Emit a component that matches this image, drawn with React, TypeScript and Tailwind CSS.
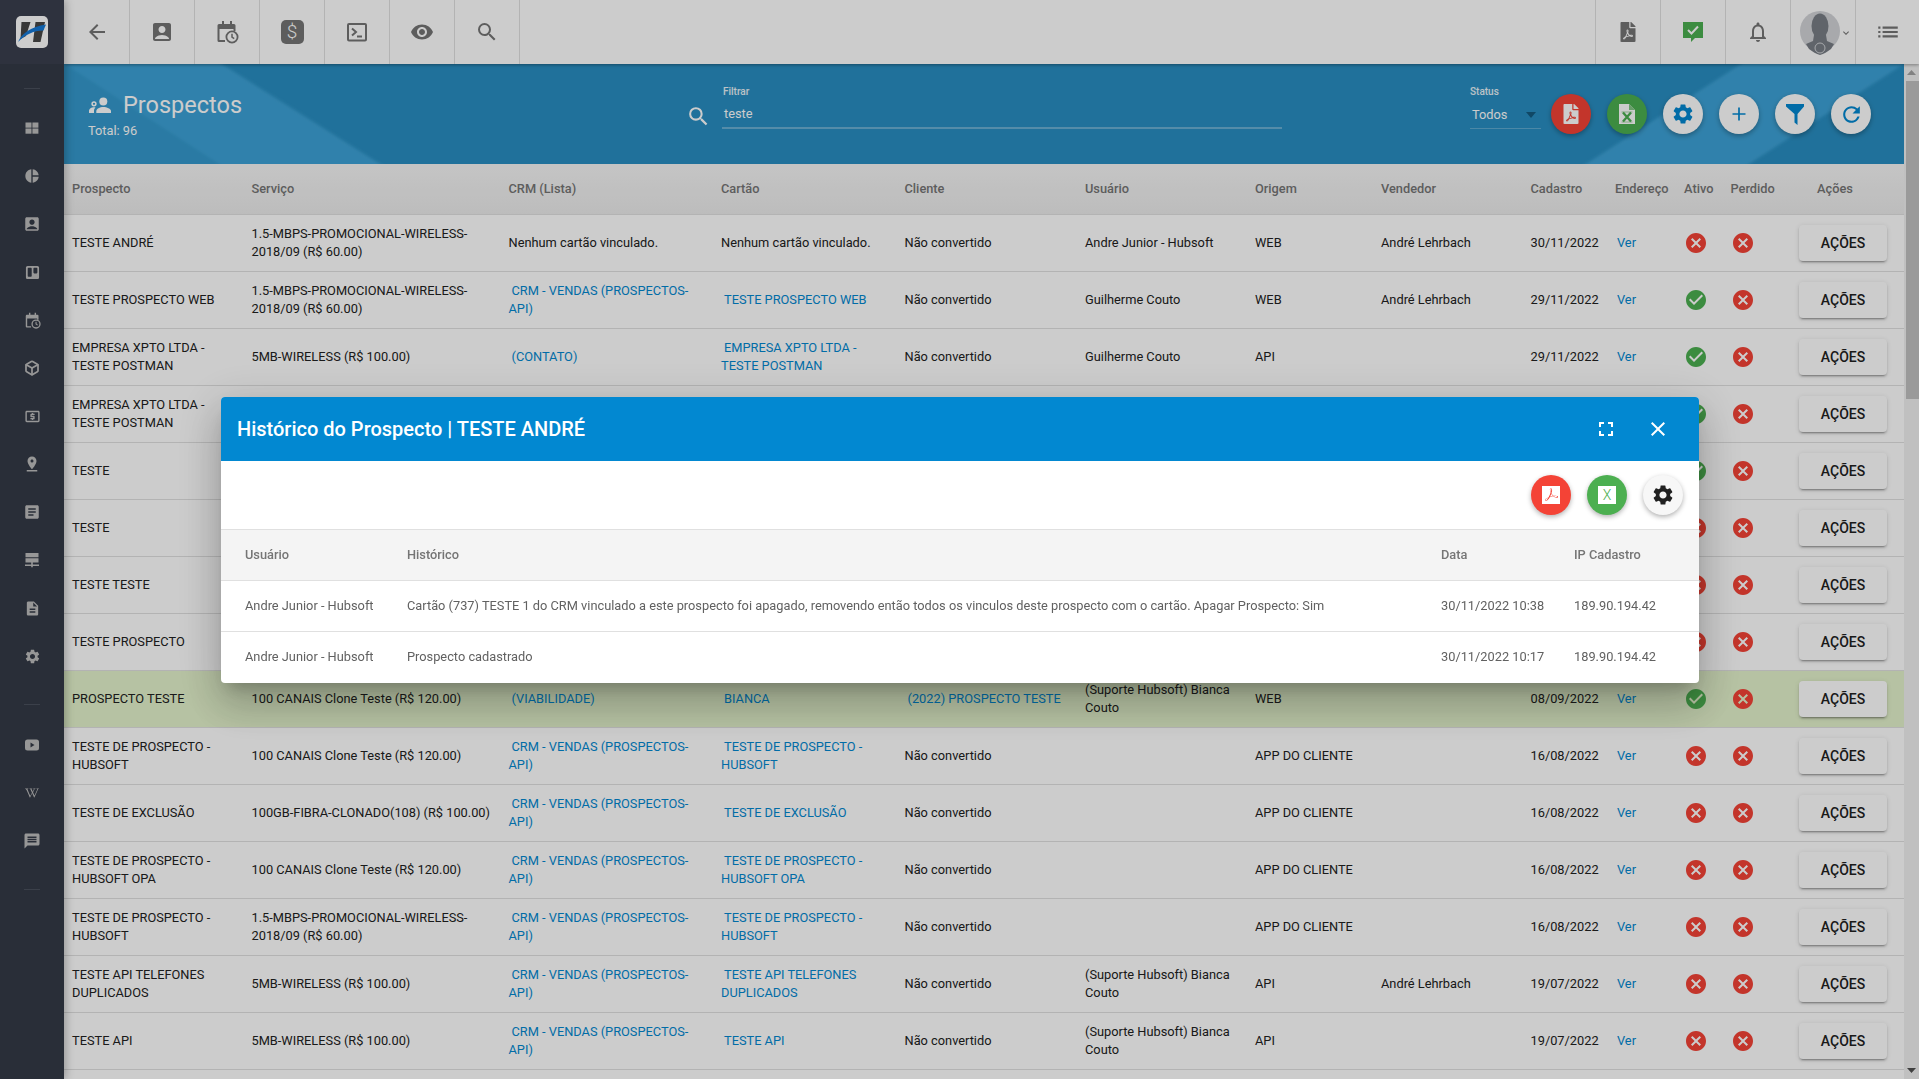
import React from "react";
import {
  MdArrowBack, MdAccountBox, MdVisibility, MdSearch, MdNotificationsNone, MdList, MdExpandMore,
  MdPieChart, MdLocalAtm, MdPinDrop, MdArticle, MdDescription, MdSettings, MdMessage,
  MdFullscreen, MdClose, MdRefresh, MdCancel, MdCheckCircle,
} from "react-icons/md";
import { FaFilePdf, FaTrello, FaWikipediaW } from "react-icons/fa";
import { SiAdobeacrobatreader } from "react-icons/si";
import { Box } from "lucide-react";

function CalendarClock({ size, bg, color }: { size: number; bg: string; color: string }) {
  return (
    <svg width={size} height={size} viewBox="0 0 24 24" fill="none">
      <path d="M7 1h2v3h6V1h2v3h2a1.5 1.5 0 0 1 1.5 1.5V11h-2V9H4.500v11H10v2H4a1.5 1.5 0 0 1-1.5-1.5v-15A1.5 1.5 0 0 1 4 4h3z" fill={color} />
      <circle cx="17" cy="17" r="5.6" fill={bg} stroke={color} strokeWidth="1.8" />
      <path d="M17 13.8V17l2.2 1.6" stroke={color} strokeWidth="1.5" />
    </svg>
  );
}

function Terminal() {
  return (
    <svg width="24" height="24" viewBox="0 0 24 24" fill="none" stroke="#757575" strokeWidth="2">
      <rect x="3" y="4" width="18" height="16.5" rx="1" />
      <path d="M7 8.5l4 3.5-4 3.5M12 16.5h5" />
    </svg>
  );
}

function GreenComment() {
  return (
    <svg width="24" height="24" viewBox="0 0 24 24">
      <path d="M2 2h20v16h-8l-4 4v-4H2z" fill="#4caf50" />
      <path d="M7 10l3.5 3.5L17 6.5" fill="none" stroke="#fff" strokeWidth="2" />
    </svg>
  );
}

function Avatar() {
  return (
    <svg width="40" height="44" viewBox="0 0 40 44">
      <circle cx="20" cy="20" r="20" fill="#d2d4d8" />
      <ellipse cx="20" cy="15" rx="8.500" ry="12.500" fill="#797e85" />
      <path d="M14 24h12l1 6 7 3-3 5c-4 3-7 5-11 6-4-1-7-3-11-6l-3-5 7-3z" fill="#797e85" />
      <circle cx="20" cy="37" r="5" fill="none" stroke="#d2d4d8" strokeWidth="1" />
    </svg>
  );
}

function Logo() {
  return (
    <svg width="32" height="32" viewBox="0 0 32 32" className="rounded-[5px]">
      <rect width="32" height="32" fill="#fff" />
      <path d="M5.500 6H14.500L10 20 4.500 23z" fill="#474747" />
      <path d="M19.500 6H29L24.500 26H17z" fill="#474747" />
      <path d="M2 26C6 17 15 11 30 8.500c-.8 2-1.500 3.500-2.500 6C17 14.500 9 19 2 26z" fill="#1479d6" />
    </svg>
  );
}

function Grid4() {
  return (
    <svg width="16" height="16" viewBox="0 0 16 16" fill="currentColor">
      <rect x="1.500" y="2.500" width="6" height="5.200" />
      <rect x="8.400" y="2.500" width="6" height="5.200" />
      <rect x="1.500" y="8.500" width="6" height="5.200" />
      <rect x="8.400" y="8.500" width="6" height="5.200" />
    </svg>
  );
}

function ServerNet() {
  return (
    <svg width="16" height="16" viewBox="0 0 16 16" fill="currentColor">
      <path d="M1.500 1h13v4.200h-13zM1.500 6.200h13v4.200h-13zM7.200 10.400h1.600v2h6.200v1.500H8.800v1.400H7.200v-1.400H1v-1.500h6.200z" />
    </svg>
  );
}

function PlayBox() {
  return (
    <svg width="16" height="16" viewBox="0 0 16 16">
      <rect x="1" y="2.500" width="14" height="11" rx="2.500" fill="currentColor" />
      <path d="M6.500 5.500l4 2.500-4 2.500z" fill="#343a46" />
    </svg>
  );
}

function Funnel() {
  return (
    <svg width="24" height="24" viewBox="0 0 24 24" fill="#0288d1">
      <path d="M3 2h18v2.500l-6.500 7.500v11l-3-2.500V12L3 4.500z" />
    </svg>
  );
}

function People() {
  return (
    <svg width="24" height="24" viewBox="0 0 24 24" fill="currentColor">
      <circle cx="15.300" cy="8.500" r="4" />
      <path d="M15.300 14c-3.500 0-7 1.700-7 4v2H23v-2c0-2.300-4.200-4-7.700-4z" />
      <circle cx="6" cy="10.800" r="1.900" fill="none" stroke="currentColor" strokeWidth="1.500" />
      <path d="M1 18c0-2.300 2.500-3.700 5-3.700.5 0 1 0 1.500.2-1 .9-1.500 2-1.500 3.300V20H1z" />
    </svg>
  );
}

function ExcelPaper() {
  return (
    <svg width="16" height="20" viewBox="0 0 16 20">
      <path d="M0 0h10l6 6v14H0z" fill="#fff" />
      <path d="M10 0l6 6h-6z" fill="#81c784" />
      <path d="M2.500 8h11M2.500 18h11" stroke="#a5d6a7" strokeWidth="1" />
      <path d="M4 8.500l8 9M12 8.500l-8 9" stroke="#4caf50" strokeWidth="2.300" />
    </svg>
  );
}

function ThinPlus() {
  return (
    <svg width="24" height="24" viewBox="0 0 24 24" fill="none" stroke="#0288d1" strokeWidth="1.700">
      <path d="M12 5.500v13M5.500 12h13" />
    </svg>
  );
}

const sideA = [
  <Grid4 />,
  <MdPieChart size={16} />,
  <MdAccountBox size={18} />,
  <FaTrello size={15} />,
  <CalendarClock size={17} bg="#343a46" color="currentColor" />,
  <Box size={16} strokeWidth={2.6} />,
  <MdLocalAtm size={17} />,
  <MdPinDrop size={18} />,
  <MdArticle size={18} />,
  <ServerNet />,
  <MdDescription size={17} />,
  <MdSettings size={17} />,
];
const sideB = [<PlayBox />, <FaWikipediaW size={14} />, <MdMessage size={18} />];

function Sidebar() {
  return (
    <aside className="w-16 shrink-0 h-full flex flex-col bg-[#343a46] text-[#bdbdbd] z-20 shadow-[2px_0_8px_rgba(0,0,0,0.25)]">
      <div className="h-16 shrink-0 bg-[#3a3f4e] flex items-center justify-center"><Logo /></div>
      <div className="mx-auto mt-6 w-4 h-px bg-[#4a505d]" />
      <div className="mt-[15px] flex flex-col">
        {sideA.map((icon, i) => (
          <div key={i} className="h-12 flex items-center justify-center">{icon}</div>
        ))}
      </div>
      <div className="mx-auto mt-6 w-4 h-px bg-[#4a505d]" />
      <div className="mt-4 flex flex-col">
        {sideB.map((icon, i) => (
          <div key={i} className="h-12 flex items-center justify-center">{icon}</div>
        ))}
      </div>
      <div className="mx-auto mt-6 w-4 h-px bg-[#4a505d]" />
    </aside>
  );
}

const leftCells = [
  <MdArrowBack size={24} />,
  <MdAccountBox size={24} />,
  <CalendarClock size={24} bg="#fff" color="#757575" />,
  <div className="w-[23px] h-6 rounded-[5px] bg-[#757575] text-white text-[19px] font-light flex items-center justify-center">$</div>,
  <Terminal />,
  <MdVisibility size={24} />,
  <MdSearch size={24} />,
];

function Topbar() {
  return (
    <header className="h-16 shrink-0 bg-white flex justify-between text-[#757575] z-10 shadow-[0_1px_3px_rgba(0,0,0,0.35)]">
      <div className="flex">
        {leftCells.map((c, i) => (
          <div key={i} className={"h-16 border-r border-[#e0e0e0] flex items-center justify-center " + (i === 0 ? "w-[66px]" : "w-[65px]")}>{c}</div>
        ))}
      </div>
      <div className="flex">
        <div className="w-[65px] h-16 border-l border-[#e0e0e0] flex items-center justify-center"><FaFilePdf size={20} /></div>
        <div className="w-[65px] h-16 border-l border-[#e0e0e0] flex items-center justify-center"><GreenComment /></div>
        <div className="w-[65px] h-16 border-l border-[#e0e0e0] flex items-center justify-center"><MdNotificationsNone size={24} /></div>
        <div className="w-[65px] h-16 border-l border-[#e0e0e0] flex items-center pl-[9px] pt-[2px]"><Avatar /><MdExpandMore size={12} /></div>
        <div className="w-[64px] h-16 border-l border-[#e0e0e0] flex items-center justify-center"><MdList size={26} /></div>
      </div>
    </header>
  );
}

function Fab({ className, children }: { className: string; children: React.ReactNode }) {
  return (
    <div className={"w-10 h-10 rounded-full flex items-center justify-center shadow-[0_2px_5px_rgba(0,0,0,0.3)] " + className}>
      {children}
    </div>
  );
}

function Band() {
  return (
    <section className="relative h-[100px] shrink-0 bg-[#298ec2] flex items-start pl-6 text-white overflow-hidden">
      <svg className="absolute inset-0 w-full h-full" viewBox="0 0 1840 100" preserveAspectRatio="none">
        <defs>
          <filter id="soft"><feGaussianBlur stdDeviation="1.500" /></filter>
        </defs>
        <g filter="url(#soft)">
          <path d="M-15-10L170 110H-20z" fill="#3599cd" />
          <path d="M-15-10H142L332 110H170z" fill="#3da2d7" />
          <path d="M1692.500-10H1855.500L1669.500 110H1506.500z" fill="#3da2d7" />
        </g>
      </svg>
      <div className="relative w-[598px] shrink-0 pt-[27px]">
        <div className="flex items-center gap-[11px] h-7">
          <People />
          <span className="text-[23.5px] leading-7">Prospectos</span>
        </div>
        <div className="mt-1 text-[12.8px] leading-4">Total: 96</div>
      </div>
      <MdSearch size={25} className="relative mt-[40px] shrink-0" />
      <div className="relative ml-[11px] mt-[22px] w-[560px] shrink-0">
        <div className="text-[10px] leading-3 font-medium pl-px text-white/90">Filtrar</div>
        <div className="mt-[7px] h-[18px] text-[12.8px] leading-[18px] pl-[2px]">teste</div>
        <div className="mt-[4px] h-[2px] bg-white/30" />
      </div>
      <div className="relative ml-[188px] mt-[22px] w-[71px] shrink-0">
        <div className="text-[10px] leading-3 font-medium text-white/90">Status</div>
        <div className="mt-[8px] h-[18px] flex items-center justify-between text-[12.8px] leading-[18px] pl-[2px] pr-[5px]">
          Todos
          <svg width="10" height="6" viewBox="0 0 10 6"><path d="M0 0h10L5 6z" fill="#145a80" /></svg>
        </div>
        <div className="mt-[4px] h-px bg-white/25" />
      </div>
      <div className="relative ml-[10px] mt-[30px] flex gap-4">
        <Fab className="bg-[#f44336] text-white"><FaFilePdf size={20} /></Fab>
        <Fab className="bg-[#4caf50]"><ExcelPaper /></Fab>
        <Fab className="bg-white text-[#0288d1]"><MdSettings size={24} /></Fab>
        <Fab className="bg-white"><ThinPlus /></Fab>
        <Fab className="bg-white"><Funnel /></Fab>
        <Fab className="bg-white text-[#0288d1]"><MdRefresh size={25} /></Fab>
      </div>
    </section>
  );
}

type Cell = string | null;
type Row = {
  name: string; svc: string; crm: Cell; card: Cell; client: Cell; clientLink?: boolean; user: string;
  origin: string; seller: string; date: string; active: boolean; green?: boolean;
};
const S15 = "1.5-MBPS-PROMOCIONAL-WIRELESS-2018/09 (R$ 60.00)";
const S5 = "5MB-WIRELESS (R$ 100.00)";
const S100 = "100 CANAIS Clone Teste (R$ 120.00)";
const CRM = "CRM - VENDAS (PROSPECTOS-API)";
const NC = "Não convertido";
const AL = "André Lehrbach";
const EX = "EMPRESA XPTO LTDA - TESTE POSTMAN";
const BI = "(Suporte Hubsoft) Bianca Couto";
const rows: Row[] = [
  { name: "TESTE ANDRÉ", svc: S15, crm: null, card: null, client: NC, user: "Andre Junior - Hubsoft", origin: "WEB", seller: AL, date: "30/11/2022", active: false },
  { name: "TESTE PROSPECTO WEB", svc: S15, crm: CRM, card: "TESTE PROSPECTO WEB", client: NC, user: "Guilherme Couto", origin: "WEB", seller: AL, date: "29/11/2022", active: true },
  { name: EX, svc: S5, crm: "(CONTATO)", card: EX, client: NC, user: "Guilherme Couto", origin: "API", seller: "", date: "29/11/2022", active: true },
  { name: EX, svc: S5, crm: "(CONTATO)", card: EX, client: NC, user: "Guilherme Couto", origin: "API", seller: "", date: "29/11/2022", active: true },
  { name: "TESTE", svc: S5, crm: CRM, card: "TESTE", client: NC, user: "Guilherme Couto", origin: "WEB", seller: "", date: "28/11/2022", active: true },
  { name: "TESTE", svc: S5, crm: CRM, card: "TESTE", client: NC, user: "Guilherme Couto", origin: "WEB", seller: "", date: "28/11/2022", active: false },
  { name: "TESTE TESTE", svc: S5, crm: CRM, card: "TESTE TESTE", client: NC, user: "Guilherme Couto", origin: "WEB", seller: "", date: "28/11/2022", active: false },
  { name: "TESTE PROSPECTO", svc: S5, crm: CRM, card: "TESTE PROSPECTO", client: NC, user: "Guilherme Couto", origin: "WEB", seller: "", date: "28/11/2022", active: false },
  { name: "PROSPECTO TESTE", svc: S100, crm: "(VIABILIDADE)", card: "BIANCA", client: "(2022) PROSPECTO TESTE", clientLink: true, user: BI, origin: "WEB", seller: "", date: "08/09/2022", active: true, green: true },
  { name: "TESTE DE PROSPECTO - HUBSOFT", svc: S100, crm: CRM, card: "TESTE DE PROSPECTO - HUBSOFT", client: NC, user: "", origin: "APP DO CLIENTE", seller: "", date: "16/08/2022", active: false },
  { name: "TESTE DE EXCLUSÃO", svc: "100GB-FIBRA-CLONADO(108) (R$ 100.00)", crm: CRM, card: "TESTE DE EXCLUSÃO", client: NC, user: "", origin: "APP DO CLIENTE", seller: "", date: "16/08/2022", active: false },
  { name: "TESTE DE PROSPECTO - HUBSOFT OPA", svc: S100, crm: CRM, card: "TESTE DE PROSPECTO - HUBSOFT OPA", client: NC, user: "", origin: "APP DO CLIENTE", seller: "", date: "16/08/2022", active: false },
  { name: "TESTE DE PROSPECTO - HUBSOFT", svc: S15, crm: CRM, card: "TESTE DE PROSPECTO - HUBSOFT", client: NC, user: "", origin: "APP DO CLIENTE", seller: "", date: "16/08/2022", active: false },
  { name: "TESTE API TELEFONES DUPLICADOS", svc: S5, crm: CRM, card: "TESTE API TELEFONES DUPLICADOS", client: NC, user: BI, origin: "API", seller: AL, date: "19/07/2022", active: false },
  { name: "TESTE API", svc: S5, crm: CRM, card: "TESTE API", client: NC, user: BI, origin: "API", seller: "", date: "19/07/2022", active: false },
];

const widths = ["w-[179.5px]", "w-[257px]", "w-[212.5px]", "w-[183.5px]", "w-[180.5px]", "w-[170px]", "w-[126px]", "w-[149.5px]", "w-[84.5px]", "w-[69px]", "w-[46.5px]", "w-[68.5px]", "w-[113px]"];
const heads = ["Prospecto", "Serviço", "CRM (Lista)", "Cartão", "Cliente", "Usuário", "Origem", "Vendedor", "Cadastro", "Endereço", "Ativo", "Perdido"];

function Lnk({ children, tight }: { children: React.ReactNode; tight?: boolean }) {
  return <a className={(tight ? "ml-[2px]" : "ml-[3px]") + " text-[#0288d1]"}>{children}</a>;
}

function Td({ children, className = "" }: { children?: React.ReactNode; className?: string }) {
  return <td className={"pl-2 align-middle border-b border-[#e0e0e0] " + className}>{children}</td>;
}

function Status({ on }: { on: boolean }) {
  return on ? <MdCheckCircle size={24} className="text-[#4caf50]" /> : <MdCancel size={24} className="text-[#f44336]" />;
}

function MainTable() {
  return (
    <table className="w-[1840px] table-fixed border-separate border-spacing-0 text-[12.8px] leading-[18px] text-[#212121]">
      <colgroup>{widths.map((w) => <col key={w} className={w} />)}</colgroup>
      <thead>
        <tr className="h-[51px] bg-[linear-gradient(#f6f6f6,#ececec)]">
          {heads.map((h) => (
            <th key={h} className="pl-2 text-left font-medium text-[#757575] whitespace-nowrap border-b border-[#e0e0e0]">{h}</th>
          ))}
          <th className="pl-[26px] text-left font-medium text-[#757575] border-b border-[#e0e0e0]">Ações</th>
        </tr>
      </thead>
      <tbody>
        {rows.map((r, i) => (
          <tr key={i} className={"h-[57px] " + (r.green ? "bg-[#e4f3cc]" : "bg-white")}>
            <Td className="pr-2">{r.name}</Td>
            <Td>{r.svc}</Td>
            <Td className="pr-2">{r.crm ? <Lnk>{r.crm}</Lnk> : "Nenhum cartão vinculado."}</Td>
            <Td className="pr-2">{r.card ? <Lnk>{r.card}</Lnk> : "Nenhum cartão vinculado."}</Td>
            <Td className="pr-2">{r.clientLink ? <Lnk>{r.client}</Lnk> : r.client}</Td>
            <Td className="pr-2">{r.user}</Td>
            <Td className="pr-2">{r.origin}</Td>
            <Td className="pr-2">{r.seller}</Td>
            <Td className="whitespace-nowrap">{r.date}</Td>
            <Td><Lnk tight>Ver</Lnk></Td>
            <Td><Status on={r.active} /></Td>
            <Td><Status on={false} /></Td>
            <Td>
              <div className="w-[88px] h-9 rounded-[4px] bg-white flex items-center justify-center text-sm font-medium text-[#212121] shadow-[0_3px_1px_-2px_rgba(0,0,0,0.2),0_2px_2px_0_rgba(0,0,0,0.14),0_1px_5px_0_rgba(0,0,0,0.12)]">AÇÕES</div>
            </Td>
          </tr>
        ))}
        <tr className="h-[57px] bg-white"><td colSpan={13} /></tr>
      </tbody>
    </table>
  );
}

function Scrollbar() {
  return (
    <div className="w-[15px] shrink-0 h-full bg-[#f1f1f1] flex flex-col">
      <div className="h-[17px] flex items-center justify-center">
        <svg width="9" height="5" viewBox="0 0 9 5"><path d="M0 5h9L4.500 0z" fill="#a3a3a3" /></svg>
      </div>
      <div className="h-[318px] ml-[2px] bg-[#c1c1c1]" />
      <div className="flex-1" />
      <div className="h-[17px] flex items-center justify-center">
        <svg width="9" height="5" viewBox="0 0 9 5"><path d="M0 0h9L4.500 5z" fill="#505050" /></svg>
      </div>
    </div>
  );
}

function Modal() {
  const mCols = ["w-[186px]", "w-[1034px]", "w-[133px]", "w-[125px]"];
  const mRows = [
    ["Andre Junior - Hubsoft", "Cartão (737) TESTE 1 do CRM vinculado a este prospecto foi apagado, removendo então todos os vinculos deste prospecto com o cartão. Apagar Prospecto: Sim", "30/11/2022 10:38", "189.90.194.42"],
    ["Andre Junior - Hubsoft", "Prospecto cadastrado", "30/11/2022 10:17", "189.90.194.42"],
  ];
  return (
    <div className="fixed inset-0 z-50 bg-black/20 flex items-center justify-center">
      <div className="ml-px w-[1478px] rounded-[4px] overflow-hidden bg-white shadow-[0_11px_15px_-7px_rgba(0,0,0,0.2),0_24px_38px_3px_rgba(0,0,0,0.14),0_9px_46px_8px_rgba(0,0,0,0.12)]">
        <div className="h-16 bg-[#0288d1] flex items-center pl-4 text-white">
          <span className="text-xl font-medium flex-1">Histórico do Prospecto | TESTE ANDRÉ</span>
          <MdFullscreen size={24} className="mr-[28px]" />
          <MdClose size={24} className="mr-[29px]" />
        </div>
        <div className="h-[69px] border-b border-[#e0e0e0] flex items-center justify-end gap-4 pr-4">
          <Fab className="bg-[#f44336]">
            <div className="w-[18px] h-[18px] bg-white flex items-center justify-center text-[#f44336]"><SiAdobeacrobatreader size={13} /></div>
          </Fab>
          <Fab className="bg-[#4caf50]">
            <div className="w-[18px] h-[18px] bg-white flex items-center justify-center text-[#4caf50] text-sm font-light">X</div>
          </Fab>
          <Fab className="bg-[#f7f7f7] text-[#212121]"><MdSettings size={24} /></Fab>
        </div>
        <table className="w-full table-fixed border-separate border-spacing-0 text-[12.8px] leading-[18px] text-[#616161]">
          <colgroup>{mCols.map((w) => <col key={w} className={w} />)}</colgroup>
          <thead>
            <tr className="h-[51px] bg-[#f4f4f4]">
              {["Usuário", "Histórico", "Data", "IP Cadastro"].map((h, i) => (
                <th key={h} className={"text-left font-medium text-[#757575] border-b border-[#e0e0e0] " + (i === 0 ? "pl-6" : "")}>{h}</th>
              ))}
            </tr>
          </thead>
          <tbody>
            {mRows.map((r, ri) => (
              <tr key={ri} className="h-[51px]">
                {r.map((c, i) => (
                  <td key={i} className={(i === 0 ? "pl-6 " : "") + (ri === 0 ? "border-b border-[#e0e0e0]" : "")}>{c}</td>
                ))}
              </tr>
            ))}
          </tbody>
        </table>
      </div>
    </div>
  );
}

export default function App() {
  return (
    <div className="h-screen w-full overflow-hidden flex bg-white font-['Roboto',sans-serif]">
      <Sidebar />
      <main className="flex-1 min-w-0 h-full flex flex-col">
        <Topbar />
        <div className="flex-1 min-h-0 flex">
          <div className="flex-1 min-w-0 overflow-hidden flex flex-col">
            <Band />
            <MainTable />
          </div>
          <Scrollbar />
        </div>
      </main>
      <Modal />
    </div>
  );
}
